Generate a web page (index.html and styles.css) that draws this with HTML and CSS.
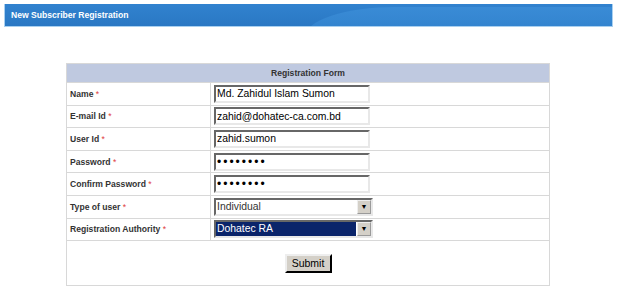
FILE: index.html
```html
<!DOCTYPE html>
<html lang="en">
<head>
  <meta charset="UTF-8">
  <title>New Subscriber Registration</title>
  <link rel="stylesheet" href="styles.css">
</head>
<body>
  <div class="titlebar">
    <span>New Subscriber Registration</span>
    <div class="swoosh"></div>
  </div>

  <table class="form">
    <tr><th colspan="2">Registration Form</th></tr>
    <tr>
      <td class="lbl">Name <span class="req">*</span></td>
      <td><input type="text" value="Md. Zahidul Islam Sumon"></td>
    </tr>
    <tr>
      <td class="lbl">E-mail Id <span class="req">*</span></td>
      <td><input type="text" value="zahid@dohatec-ca.com.bd"></td>
    </tr>
    <tr>
      <td class="lbl">User Id <span class="req">*</span></td>
      <td><input type="text" value="zahid.sumon"></td>
    </tr>
    <tr>
      <td class="lbl">Password <span class="req">*</span></td>
      <td><input type="password" class="pw" value="12345678"></td>
    </tr>
    <tr>
      <td class="lbl">Confirm Password <span class="req">*</span></td>
      <td><input type="password" class="pw" value="12345678"></td>
    </tr>
    <tr>
      <td class="lbl">Type of user <span class="req">*</span></td>
      <td><div class="sel"><span class="val">Individual</span><span class="arrow">&#9660;</span></div></td>
    </tr>
    <tr>
      <td class="lbl">Registration Authority <span class="req">*</span></td>
      <td><div class="sel"><span class="val picked">Dohatec RA</span><span class="arrow">&#9660;</span></div></td>
    </tr>
    <tr>
      <td colspan="2" class="actions"><button>Submit</button></td>
    </tr>
  </table>
</body>
</html>
```

FILE: styles.css
```css
body { margin: 0; background: #fff; font-family: "Liberation Sans", Arial, sans-serif; }
.titlebar { position: relative; overflow: hidden; margin: 4px 4px 0 4px; height: 23px; background: linear-gradient(#3182cf, #2a78c4); border: 1px solid #a9d0f0; border-top: none; color: #fff; font-weight: bold; font-size: 8.6px; line-height: 23px; padding-left: 6px; box-sizing: border-box; }
.titlebar span { position: relative; z-index: 1; }
.swoosh { position: absolute; left: 300px; top: 3px; right: 0; height: 40px; border-top-left-radius: 90px 30px; background: linear-gradient(#3c8ed8, #2f80cc); opacity: 0.8; }
.form { margin: 36px 0 0 66px; width: 484px; border-collapse: collapse; border: 1px solid #d8d8d8; font-size: 8.6px; color: #333; }
.form th { background: #bfc9e0; height: 18px; padding: 0; font-weight: bold; font-size: 8.6px; border-bottom: 1px solid #d8d8d8; }
.form td { height: 21.6px; padding: 0; border-bottom: 1px solid #d8d8d8; }
.form td.lbl { width: 140px; padding-left: 3px; font-weight: bold; border-right: 1px solid #d8d8d8; }
.form td + td { padding-left: 3px; }
.req { color: #e04040; font-weight: normal; }
input { width: 156px; height: 18px; box-sizing: border-box; border: 2px inset #bbb; border-right-color: #e8e8e8; border-bottom-color: #e8e8e8; padding: 0 1px; font-family: "Liberation Sans", Arial, sans-serif; font-size: 10.4px; color: #000; display: block; }
input.pw { font-size: 12px; letter-spacing: 2px; }
.sel { width: 159px; height: 18px; box-sizing: border-box; border: 2px inset #bbb; border-right-color: #e8e8e8; border-bottom-color: #e8e8e8; display: flex; font-size: 10.4px; background: #fff; }
.sel .val { flex: 1; padding-left: 1px; line-height: 14px; margin: 0 1px 0 0; }
.sel .picked { background: #0a246a; color: #fff; }
.sel .arrow { width: 14px; background: #d4d0c8; border: 1px outset #eee; box-sizing: border-box; font-size: 7px; text-align: center; line-height: 12px; color: #000; }
.form td.actions { height: 44px; text-align: center; border-bottom: none; padding: 0; }
button { width: 47px; height: 19px; background: #d4d0c8; border: 2px outset #eee; border-right-color: #404040; border-bottom-color: #404040; font-family: "Liberation Sans", Arial, sans-serif; font-size: 10.5px; color: #000; padding: 0; }
```
